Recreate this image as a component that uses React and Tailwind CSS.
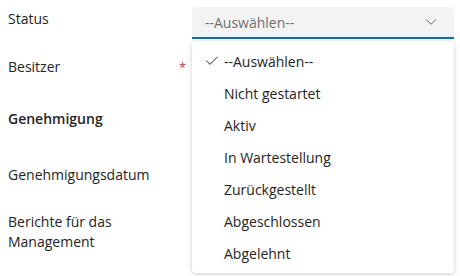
import { Check, ChevronDown } from 'lucide-react'

const options = [
  '--Auswählen--',
  'Nicht gestartet',
  'Aktiv',
  'In Wartestellung',
  'Zurückgestellt',
  'Abgeschlossen',
  'Abgelehnt',
]

function FieldRow({ label, required, bold, className }) {
  return (
    <div className={`flex ${className}`}>
      <div className={`w-[184px] pl-2 text-[14px] leading-5 text-[#242424] ${bold ? 'font-semibold' : ''}`}>
        {label}
      </div>
      {required ? <span className="-ml-[5px] text-[13px] leading-5 text-[#c4314b]">*</span> : null}
    </div>
  )
}

export default function App() {
  return (
    <div
      className="relative h-[276px] w-[460px] overflow-hidden bg-white"
      style={{ fontFamily: '"Segoe UI", "Open Sans", sans-serif' }}
    >
      <div className="flex flex-col">
        <div className="flex items-start pt-[7px]">
          <div className="w-[192px] pl-2 pt-[2px] text-[14px] leading-5 text-[#242424]">Status</div>
          <button className="flex h-[32px] w-[262px] items-center justify-between rounded-t-[4px] border-b-2 border-[#0f6cbd] bg-[#f3f3f3] pl-[13px] pr-[14px] text-[14px] text-[#707070]">
            <span>--Auswählen--</span>
            <ChevronDown size={18} strokeWidth={1.25} className="text-[#616161]" />
          </button>
        </div>
        <FieldRow label="Besitzer" required className="mt-[18px]" />
        <FieldRow label="Genehmigung" bold className="mt-[32px]" />
        <FieldRow label="Genehmigungsdatum" className="mt-[36px]" />
        <div className="mt-[27px] w-[184px] pl-2 text-[14px] leading-5 text-[#242424]">
          Berichte für das
          <br />
          Management
        </div>
      </div>

      <div className="absolute left-[192px] top-[41px] w-[262px] rounded-[4px] bg-white py-[4px] shadow-[0_2px_6px_rgba(0,0,0,0.14),0_0_2px_rgba(0,0,0,0.12)]">
        {options.map((option, i) => (
          <div key={option} className="flex h-[32px] items-center text-[14px] text-[#242424]">
            <span className="flex w-[32px] justify-end pr-[4px]">
              {i === 0 ? <Check size={16} strokeWidth={1.5} className="text-[#242424]" /> : null}
            </span>
            <span>{option}</span>
          </div>
        ))}
      </div>
    </div>
  )
}
